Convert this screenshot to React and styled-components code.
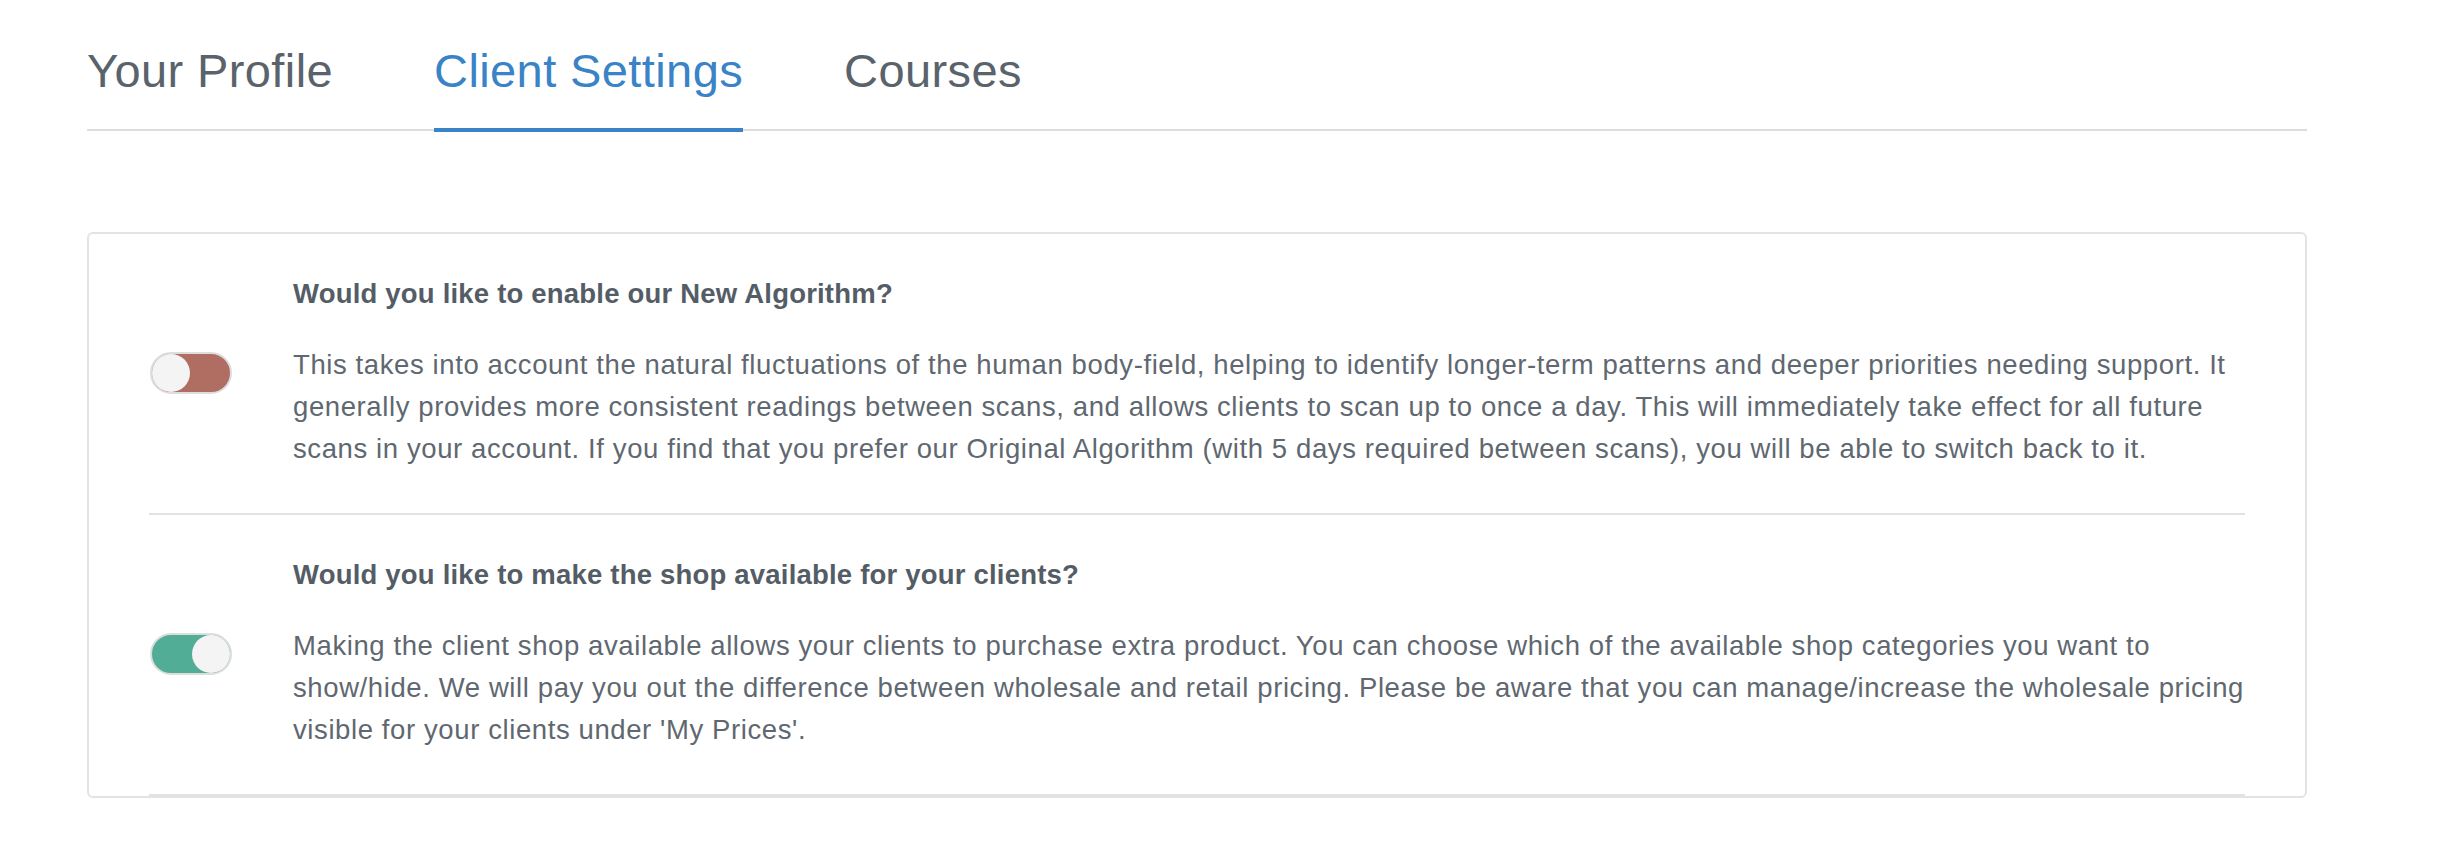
import styled, { createGlobalStyle } from "styled-components";

const GlobalStyle = createGlobalStyle`
  html, body {
    margin: 0;
    padding: 0;
    background: #ffffff;
  }

  body {
    font-family: "Liberation Sans", Arial, Helvetica, sans-serif;
    color: #5e6770;
  }
`;

const tabs = ["Your Profile", "Client Settings", "Courses"];

const settings = [
  {
    title: "Would you like to enable our New Algorithm?",
    text:
      "This takes into account the natural fluctuations of the human body-field, helping to identify longer-term patterns and deeper priorities needing support. It generally provides more consistent readings between scans, and allows clients to scan up to once a day. This will immediately take effect for all future scans in your account. If you find that you prefer our Original Algorithm (with 5 days required between scans), you will be able to switch back to it.",
    on: false,
  },
  {
    title: "Would you like to make the shop available for your clients?",
    text:
      "Making the client shop available allows your clients to purchase extra product. You can choose which of the available shop categories you want to show/hide. We will pay you out the difference between wholesale and retail pricing. Please be aware that you can manage/increase the wholesale pricing visible for your clients under 'My Prices'.",
    on: true,
  },
];

function App() {
  return (
    <Wrapper>
      <GlobalStyle />
      <TabBar>
        {tabs.map((t) => (
          <Tab key={t} $active={t === "Client Settings"}>
            {t}
          </Tab>
        ))}
      </TabBar>

      <Card>
        {settings.map((s) => (
          <SettingRow key={s.title}>
            <Question>{s.title}</Question>
            <Toggle $on={s.on} aria-pressed={s.on}>
              <Knob $on={s.on} />
            </Toggle>
            <Description>{s.text}</Description>
          </SettingRow>
        ))}
      </Card>
    </Wrapper>
  );
}

export default App;

const Wrapper = styled.div`
  width: 2220px;
  padding: 48px 0 40px 87px;
`;

const TabBar = styled.div`
  display: flex;
  gap: 101px;
  border-bottom: 2px solid #dddddd;
`;

const Tab = styled.div`
  font-size: 47px;
  line-height: 46px;
  letter-spacing: 0.4px;
  padding-bottom: 34px;
  margin-bottom: -3px;
  color: ${(p) => (p.$active ? "#3a83c6" : "#5a636b")};
  border-bottom: 4px solid
    ${(p) => (p.$active ? "#3a83c6" : "transparent")};
  cursor: pointer;
`;

const Card = styled.div`
  margin-top: 101px;
  border: 2px solid #e3e3e3;
  border-radius: 6px;
  padding: 0 60px;
`;

const SettingRow = styled.div`
  display: grid;
  grid-template-columns: 144px 1fr;
  padding: 43px 0 43px;
  border-bottom: 2px solid #e2e2e2;
`;

const Question = styled.h3`
  grid-column: 2;
  margin: 0 0 34px;
  font-size: 27.5px;
  line-height: 33px;
  letter-spacing: 0.2px;
  font-weight: 700;
  color: #545d66;
`;

const Toggle = styled.button`
  grid-column: 1;
  margin: 8px 0 0 1px;
  padding: 0;
  width: 82px;
  height: 42px;
  border: 2px solid #dddddd;
  border-radius: 21px;
  background: ${(p) => (p.$on ? "#52ad96" : "#b06d61")};
  display: flex;
  align-items: center;
  justify-content: ${(p) => (p.$on ? "flex-end" : "flex-start")};
  cursor: pointer;
`;

const Knob = styled.span`
  display: block;
  width: 38px;
  height: 38px;
  border-radius: 50%;
  background: #f4f4f4;
`;

const Description = styled.p`
  grid-column: 2;
  margin: 0;
  font-size: 27.5px;
  line-height: 42px;
  letter-spacing: 0.6px;
  color: #5f6870;
`;
